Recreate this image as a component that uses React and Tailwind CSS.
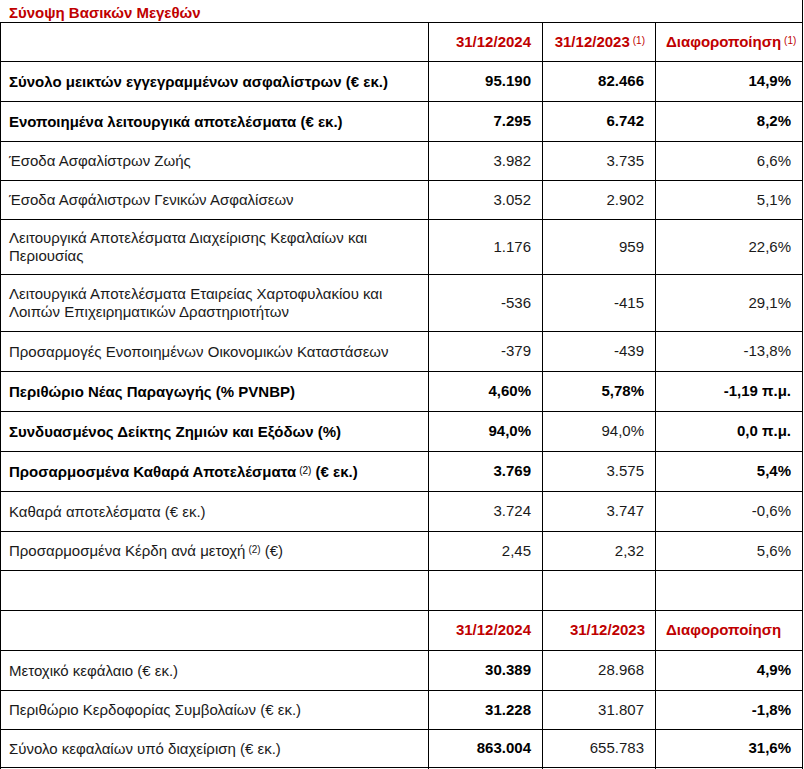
const rows = [
  { label: 'Σύνολο μεικτών εγγεγραμμένων ασφαλίστρων (€ εκ.)', bold: true, v: ['95.190', '82.466', '14,9%'], b: [1, 1, 1], h: 'h-[40px]' },
  { label: 'Ενοποιημένα λειτουργικά αποτελέσματα (€ εκ.)', bold: true, v: ['7.295', '6.742', '8,2%'], b: [1, 1, 1], h: 'h-[40px]' },
  { label: 'Έσοδα Ασφαλίστρων Ζωής', v: ['3.982', '3.735', '6,6%'], b: [0, 0, 0], h: 'h-[39px]' },
  { label: 'Έσοδα Ασφάλιστρων Γενικών Ασφαλίσεων', v: ['3.052', '2.902', '5,1%'], b: [0, 0, 0], h: 'h-[39px]' },
  { label: 'Λειτουργικά Αποτελέσματα Διαχείρισης Κεφαλαίων και Περιουσίας', v: ['1.176', '959', '22,6%'], b: [0, 0, 0], h: 'h-[55px]' },
  { label: 'Λειτουργικά Αποτελέσματα Εταιρείας Χαρτοφυλακίου και Λοιπών Επιχειρηματικών Δραστηριοτήτων', v: ['-536', '-415', '29,1%'], b: [0, 0, 0], h: 'h-[57px]' },
  { label: 'Προσαρμογές Ενοποιημένων Οικονομικών Καταστάσεων', v: ['-379', '-439', '-13,8%'], b: [0, 0, 0], h: 'h-[40px]' },
  { label: 'Περιθώριο Νέας Παραγωγής (% PVNBP)', bold: true, v: ['4,60%', '5,78%', '-1,19 π.μ.'], b: [1, 1, 1], h: 'h-[40px]' },
  { label: 'Συνδυασμένος Δείκτης Ζημιών και Εξόδων (%)', bold: true, v: ['94,0%', '94,0%', '0,0 π.μ.'], b: [1, 0, 1], h: 'h-[40px]' },
  { label: 'Προσαρμοσμένα Καθαρά Αποτελέσματα', sup: '(2)', tail: ' (€ εκ.)', bold: true, v: ['3.769', '3.575', '5,4%'], b: [1, 0, 1], h: 'h-[40px]' },
  { label: 'Καθαρά αποτελέσματα (€ εκ.)', v: ['3.724', '3.747', '-0,6%'], b: [0, 0, 0], h: 'h-[40px]' },
  { label: 'Προσαρμοσμένα Κέρδη ανά μετοχή', sup: '(2)', tail: ' (€)', v: ['2,45', '2,32', '5,6%'], b: [0, 0, 0], h: 'h-[39px]' },
];

const rows2 = [
  { label: 'Μετοχικό κεφάλαιο (€ εκ.)', v: ['30.389', '28.968', '4,9%'], b: [1, 0, 1], h: 'h-[40px]' },
  { label: 'Περιθώριο Κερδοφορίας Συμβολαίων (€ εκ.)', v: ['31.228', '31.807', '-1,8%'], b: [1, 0, 1], h: 'h-[39px]' },
  { label: 'Σύνολο κεφαλαίων υπό διαχείριση (€ εκ.)', v: ['863.004', '655.783', '31,6%'], b: [1, 0, 1], h: 'h-[38px]' },
];

const grid = 'grid grid-cols-[428px_114px_113px_147px] border-b border-black';
const cell = 'border-r border-black flex items-center';

function Sup({ children }) {
  return <sup className="text-[10px] font-normal relative -top-[3px] ml-[3px]">{children}</sup>;
}

function DataRow({ r }) {
  return (
    <div className={`${grid} ${r.h}`}>
      <div className={`${cell} pl-[8px] pr-2 leading-[18px] ${r.bold ? 'font-bold text-black' : ''}`}>
        <span>
          {r.label}
          {r.sup && <Sup>{r.sup}</Sup>}
          {r.tail}
        </span>
      </div>
      {r.v.map((x, i) => (
        <div key={i} className={`${cell} justify-end pr-[11px] ${r.b[i] ? 'font-bold text-black' : ''}`}>
          {x}
        </div>
      ))}
    </div>
  );
}

function HeaderRow({ h, sup }) {
  return (
    <div className={`${grid} ${h} text-[#c00000] font-bold`}>
      <div className={cell}></div>
      <div className={`${cell} justify-end pr-[11px]`}>31/12/2024</div>
      <div className={`${cell} justify-end pr-[10px]`}>
        <span>
          31/12/2023{sup && <Sup>(1)</Sup>}
        </span>
      </div>
      <div className={`${cell} pl-[10px]`}>
        <span>
          Διαφοροποίηση{sup && <Sup>(1)</Sup>}
        </span>
      </div>
    </div>
  );
}

export default function App() {
  return (
    <div className="w-[804px] h-[769px] overflow-hidden bg-white text-[15px] text-[#1a1a1a] font-['Liberation_Sans',Arial,sans-serif]">
      <div className="w-[803px] h-[23px] border-b border-r border-black flex items-center pl-[9px] pt-[4px] text-[#c00000] font-bold">
        Σύνοψη Βασικών Μεγεθών
      </div>
      <div className="w-[803px] border-l border-black">
        <HeaderRow h="h-[39px]" sup />
        {rows.map((r, i) => (
          <DataRow key={i} r={r} />
        ))}
        <div className={`${grid} h-[40px]`}>
          <div className={cell}></div>
          <div className={cell}></div>
          <div className={cell}></div>
          <div className={cell}></div>
        </div>
        <HeaderRow h="h-[40px]" />
        {rows2.map((r, i) => (
          <DataRow key={i} r={r} />
        ))}
        <div className={`${grid} h-[40px]`}>
          <div className={cell}></div>
          <div className={cell}></div>
          <div className={cell}></div>
          <div className={cell}></div>
        </div>
      </div>
    </div>
  );
}
